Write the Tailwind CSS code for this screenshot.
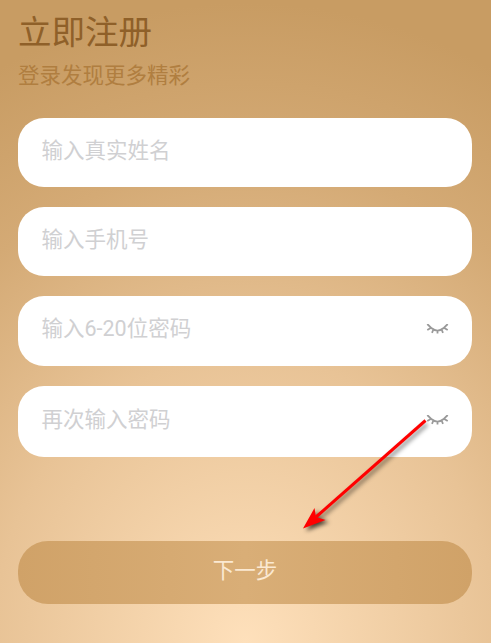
<!DOCTYPE html>
<html lang="zh">
<head>
    <meta charset="UTF-8">
    <meta name="viewport" content="width=device-width, initial-scale=1.0">
    <title>立即注册</title>
    <script src="https://cdn.jsdelivr.net/npm/@tailwindcss/browser@4"></script>
</head>
<body class="overflow-hidden">
    <div class="relative h-[643px] w-[491px] overflow-hidden bg-[radial-gradient(ellipse_560px_640px_at_50%_100%,#fee0bb_0%,#e8c396_45%,#d4aa75_75%,#c89c63_100%)] pr-[19px] pl-[18px] font-['Roboto','Noto_Sans_CJK_SC',sans-serif]">
        <h1 class="pt-[11px] text-[33.5px] leading-[44px] font-normal text-[#8f6029]">立即注册</h1>
        <p class="mt-[5px] text-[21.5px] leading-[32px] text-[#b07e40]">登录发现更多精彩</p>

        <!-- form rows -->
        <div class="mt-[26px] flex h-[69px] items-center rounded-[26px] bg-white px-[23.5px] pb-[3px] text-[21.5px] text-[#d0d0d2]">输入真实姓名</div>
        <div class="mt-[20px] flex h-[69px] items-center rounded-[26px] bg-white px-[23.5px] pb-[3px] text-[21.5px] text-[#d0d0d2]">输入手机号</div>
        <div class="mt-[20px] flex h-[70px] items-center justify-between rounded-[26px] bg-white pr-[22px] pl-[23.5px] text-[21.5px] text-[#d0d0d2]">
            <span class="pb-[3px]">输入6-20位密码</span>
            <svg class="mb-[4px] h-[10px] w-[25px]" viewBox="0 0 25 10" fill="none" stroke="#999" stroke-width="1.800">
                <path d="M6.700 4.300Q12.500 9 18.300 4.300M2.300 0L6.700 4.300M2.300 6L5.700 4M22.700 0L18.300 4.300M22.700 6L19.300 4M8.200 6L7 8.800M12.500 6.800V9.600M16.800 6L18 8.800"/>
            </svg>
        </div>
        <div class="mt-[20px] flex h-[71px] items-center justify-between rounded-[26px] bg-white pr-[22px] pl-[23.5px] text-[21.5px] text-[#d0d0d2]">
            <span class="pb-[3px]">再次输入密码</span>
            <svg class="mb-[4px] h-[10px] w-[25px]" viewBox="0 0 25 10" fill="none" stroke="#999" stroke-width="1.800">
                <path d="M6.700 4.300Q12.500 9 18.300 4.300M2.300 0L6.700 4.300M2.300 6L5.700 4M22.700 0L18.300 4.300M22.700 6L19.300 4M8.200 6L7 8.800M12.500 6.800V9.600M16.800 6L18 8.800"/>
            </svg>
        </div>

        <div class="mt-[84px] flex h-[63px] items-center justify-center rounded-[30px] bg-[linear-gradient(90deg,#d0a268_0%,#d9ae77_50%,#d0a268_100%)] pb-[2px] text-[21.5px] text-[#fbe9d2]">下一步</div>

        <!-- red arrow annotation -->
        <svg class="absolute top-0 left-0 h-[643px] w-[491px]" viewBox="0 0 491 643" fill="none">
            <path d="M425 421L317 516" stroke="#000" stroke-opacity=".4" stroke-width="4" transform="translate(2 3)" class="blur-[2px]"/>
            <path d="M303 529L315 508L316 517L326 520Z" fill="#000" fill-opacity=".7" transform="translate(3 2)" class="blur-[2px]"/>
            <path d="M425.500 420.500L316 517" stroke="#f00" stroke-width="3"/>
            <path d="M303 528.500L314.500 508L316 517L325.500 520Z" fill="#f00"/>
        </svg>
    </div>
</body>
</html>
